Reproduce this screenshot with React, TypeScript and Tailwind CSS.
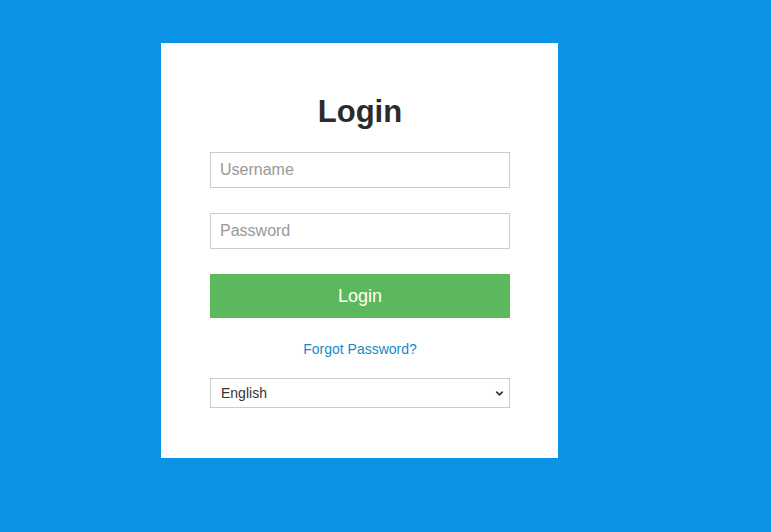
import React, { useState } from 'react';
import { ChevronDown } from 'lucide-react';

export default function App() {
  const [username, setUsername] = useState('');
  const [password, setPassword] = useState('');
  const [lang, setLang] = useState('en');

  return (
    <div className="min-h-screen w-full bg-[#0b94e6] pt-[43px] pl-[161px] font-['Liberation_Sans',Arial,sans-serif]">
      <div className="w-[397px] h-[415px] bg-white pt-[52px] pl-[49px] pr-[48px]">
        <h1 className="text-center text-[31px] leading-[34px] font-bold text-[#2b2b2b]">Login</h1>

        <form onSubmit={(e) => e.preventDefault()} className="mt-[23px] flex flex-col">
          <input
            type="text"
            value={username}
            onChange={e => setUsername(e.target.value)}
            placeholder="Username"
            className="w-full h-[36px] px-[9px] border border-[#cccccc] text-[16px] text-[#333] placeholder:text-[#999] outline-none"
          />
          <input
            type="password"
            value={password}
            onChange={e => setPassword(e.target.value)}
            placeholder="Password"
            className="mt-[25px] w-full h-[36px] px-[9px] border border-[#cccccc] text-[16px] text-[#333] placeholder:text-[#999] outline-none"
          />
          <button type="submit" className="mt-[25px] w-full h-[44px] bg-[#5cb85c] text-white text-[18px]">
            Login
          </button>
        </form>

        <div className="mt-[21px] h-[20px] flex items-center justify-center">
          <a href="#" className="text-[14px] text-[#138bc8]">Forgot Password?</a>
        </div>

        <div className="relative mt-[19px] h-[30px]">
          <select
            value={lang}
            onChange={e => setLang(e.target.value)}
            className="appearance-none w-full h-[30px] pl-[10px] border border-[#cccccc] bg-white text-[14px] text-[#333] outline-none"
          >
            <option value="en">English</option>
            <option value="de">Deutsch</option>
            <option value="fr">Français</option>
          </select>
          <ChevronDown className="absolute right-[5px] top-[10px] w-[11px] h-[11px] text-[#333] pointer-events-none" strokeWidth={3.5} />
        </div>
      </div>
    </div>
  );
}
